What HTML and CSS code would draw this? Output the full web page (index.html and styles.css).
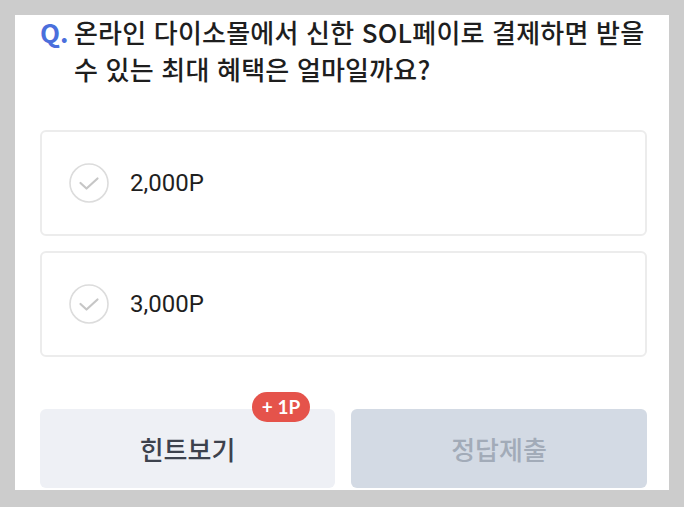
FILE: index.html
```html
<!DOCTYPE html>
<html lang="ko">
<head>
<meta charset="utf-8">
<link rel="stylesheet" href="styles.css">
</head>
<body>
<main class="panel">
  <h1 class="question">
    <span class="q-mark">Q.</span>
    <span class="q-text">온라인 다이소몰에서 신한 SOL페이로 결제하면 받을 수 있는 최대 혜택은 얼마일까요?</span>
  </h1>
  <ul class="options">
    <li class="option">
      <svg class="check" width="40" height="40" viewBox="0 0 40 40" aria-hidden="true">
        <circle cx="20" cy="20" r="19" fill="none" stroke="#dcdcdc" stroke-width="1.6"/>
        <path d="M11.5 20 L17.5 25.5 L28.5 15.5" fill="none" stroke="#c6c6c6" stroke-width="2.2" stroke-linecap="round" stroke-linejoin="round"/>
      </svg>
      <span class="option-label">2,000P</span>
    </li>
    <li class="option">
      <svg class="check" width="40" height="40" viewBox="0 0 40 40" aria-hidden="true">
        <circle cx="20" cy="20" r="19" fill="none" stroke="#dcdcdc" stroke-width="1.6"/>
        <path d="M11.5 20 L17.5 25.5 L28.5 15.5" fill="none" stroke="#c6c6c6" stroke-width="2.2" stroke-linecap="round" stroke-linejoin="round"/>
      </svg>
      <span class="option-label">3,000P</span>
    </li>
  </ul>
  <div class="actions">
    <button class="btn btn-hint" type="button">힌트보기<span class="badge">+ 1P</span></button>
    <button class="btn btn-submit" type="button" disabled>정답제출</button>
  </div>
</main>
</body>
</html>
```
FILE: styles.css
```css
html, body {
  margin: 0;
  padding: 0;
}
body {
  background: #cccccc;
  width: 684px;
  height: 507px;
  overflow: hidden;
  font-family: "Noto Sans CJK KR", "Noto Sans", sans-serif;
}
.panel {
  margin: 15px 15px 0 15px;
  height: 475px;
  background: #ffffff;
  box-sizing: border-box;
  padding: 0 22px 0 25px;
  display: flex;
  flex-direction: column;
}
.question {
  margin: -2px -10px 0 0;
  display: flex;
  font-size: 26px;
  line-height: 37px;
  font-weight: 500;
  color: #1e1e1e;
}
.q-mark {
  color: #4a6fdc;
  font-weight: 700;
  flex: 0 0 34px;
}
.q-text {
  flex: 1;
  letter-spacing: 0.2px;
}
.options {
  list-style: none;
  margin: 43px 0 0 0;
  padding: 0;
  display: flex;
  flex-direction: column;
  gap: 15px;
}
.option {
  height: 106px;
  box-sizing: border-box;
  border: 2px solid #ececec;
  border-radius: 6px;
  display: flex;
  align-items: center;
  padding-left: 27px;
  gap: 21px;
}
.check {
  flex: 0 0 40px;
  display: block;
}
.option-label {
  font-family: Roboto, "Noto Sans CJK KR", sans-serif;
  font-size: 24px;
  color: #1f1f1f;
}
.actions {
  margin-top: auto;
  margin-bottom: 2px;
  display: grid;
  grid-template-columns: 295px 296px;
  justify-content: space-between;
}
.btn {
  height: 79px;
  border: none;
  border-radius: 6px;
  font-family: "Noto Sans CJK KR", "Noto Sans", sans-serif;
  font-size: 26px;
  font-weight: 500;
  position: relative;
  padding: 0;
}
.btn-hint {
  background: #eef0f5;
  color: #3d424d;
}
.btn-submit {
  background: #d3dae4;
  color: #a2abb8;
}
.badge {
  position: absolute;
  top: -17px;
  right: 25px;
  width: 58px;
  height: 30px;
  border-radius: 15px;
  background: #e5534b;
  color: #ffffff;
  font-family: Lato, "Noto Sans", sans-serif;
  font-weight: 700;
  font-size: 19px;
  line-height: 30px;
  text-align: center;
}
```
